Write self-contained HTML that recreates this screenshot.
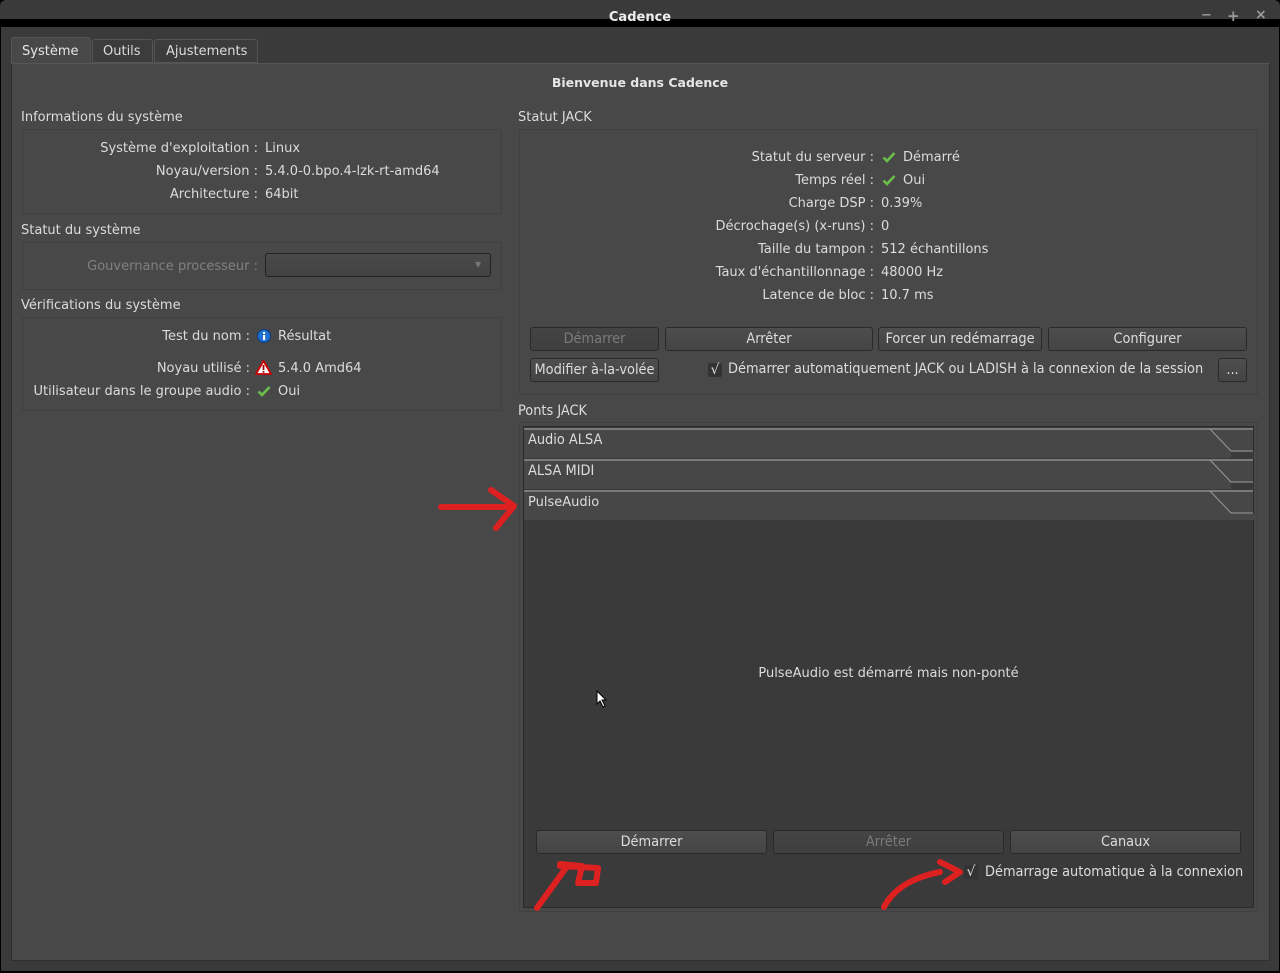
<!DOCTYPE html>
<html><head><meta charset="utf-8"><style>
*{box-sizing:border-box;margin:0;padding:0}
body{width:1280px;height:973px;background:#000;font-family:"DejaVu Sans","Liberation Sans",sans-serif;font-size:13px;color:#dcdcdc;position:relative;overflow:hidden}
.a{position:absolute;white-space:nowrap}
#w{position:absolute;left:0;top:3px;width:1280px;height:970px}
.box{position:absolute;border:1px solid #404040;border-radius:2px}
.btn{position:absolute;height:24px;border:1px solid #2a2a2a;border-radius:3px;background:linear-gradient(#4e4e4e,#444);font-family:"DejaVu Sans Condensed","DejaVu Sans",sans-serif;font-size:14.4px;text-align:center;line-height:22px;color:#dcdcdc}
.dis{color:#7a7a7a;background:linear-gradient(#444,#3f3f3f)}
.r{text-align:right}
.cond{font-family:"DejaVu Sans Condensed","DejaVu Sans",sans-serif;font-size:14.4px}
.hdr{position:absolute;left:524px;width:729px;height:30px;background:#474747;border-top:2px solid #7a7a7a}
.cb{position:absolute;width:14px;height:14px;background:#333;border-radius:2px;color:#ddd;font-size:14px;line-height:14px;text-align:center}
</style></head><body>
<div class="a" style="left:0;top:0;width:1280px;height:19px;background:#3a3a3a;border-radius:6px 6px 0 0"></div>
<div class="a" style="left:0;top:10px;width:1280px;text-align:center;font-weight:bold;color:#eee;font-size:13px;line-height:16px;z-index:2">Cadence</div>
<div class="a" style="left:1201px;top:8px;color:#999;font-weight:bold">−</div>
<div class="a" style="left:1227px;top:7px;color:#999;font-weight:bold;font-size:15px">+</div>
<div class="a" style="left:1255px;top:7px;color:#999;font-weight:bold;font-size:14px">×</div>
<div class="a" style="left:1px;top:27px;width:1278px;height:944px;background:#3a3a3a"></div>
<div id="w">
<div class="a" style="left:11px;top:34px;width:80px;height:28px;background:#484848;border:1px solid #555;border-bottom:none;border-radius:3px 3px 0 0;padding:6px 0 0 10px;color:#e6e6e6">Système</div>
<div class="a" style="left:92px;top:36px;width:61px;height:24px;background:#3c3c3c;border:1px solid #555;border-radius:3px 3px 0 0;padding:4px 0 0 10px">Outils</div>
<div class="a" style="left:154px;top:36px;width:104px;height:24px;background:#3c3c3c;border:1px solid #555;border-radius:3px 3px 0 0;padding:4px 0 0 11px">Ajustements</div>
<div class="a" style="left:11px;top:60px;width:1259px;height:898px;background:#484848;border:1px solid #2f2f2f;border-top:1px solid #555"></div>
<div class="a" style="left:0;top:72px;width:1280px;text-align:center;font-weight:bold;font-size:12.5px;color:#e6e6e6">Bienvenue dans Cadence</div>
<div class="a" style="left:21px;top:107px">Informations du système</div>
<div class="box" style="left:22px;top:126px;width:480px;height:85px"></div>
<div class="a r" style="left:30px;width:228px;top:138px">Système d'exploitation :</div><div class="a" style="left:265px;top:138px">Linux</div>
<div class="a r" style="left:30px;width:228px;top:161px">Noyau/version :</div><div class="a" style="left:265px;top:161px">5.4.0-0.bpo.4-lzk-rt-amd64</div>
<div class="a r" style="left:30px;width:228px;top:184px">Architecture :</div><div class="a" style="left:265px;top:184px">64bit</div>
<div class="a" style="left:21px;top:220px">Statut du système</div>
<div class="box" style="left:22px;top:239px;width:480px;height:48px"></div>
<div class="a r" style="left:30px;width:228px;top:256px;color:#808080">Gouvernance processeur :</div>
<div class="a" style="left:265px;top:250px;width:226px;height:24px;border:1px solid #222;border-radius:3px;background:linear-gradient(#4a4a4a,#424242)"></div>
<div class="a" style="left:475px;top:257px;color:#777;font-size:8px">▼</div>
<div class="a" style="left:21px;top:295px">Vérifications du système</div>
<div class="box" style="left:22px;top:314px;width:480px;height:94px"></div>
<div class="a r" style="left:30px;width:220px;top:326px">Test du nom :</div>
<svg class="a" style="left:257px;top:326px" width="14" height="14"><circle cx="7" cy="7" r="6.5" fill="#1e6fd0" stroke="#0c3d80"/><rect x="6" y="6" width="2.2" height="5" fill="#fff"/><circle cx="7.1" cy="4" r="1.2" fill="#fff"/></svg>
<div class="a" style="left:278px;top:326px">Résultat</div>
<div class="a r" style="left:30px;width:220px;top:358px">Noyau utilisé :</div>
<svg class="a" style="left:255px;top:357px" width="17" height="15"><path d="M8.5 1L16 14H1z" fill="#fff" stroke="#c00" stroke-width="1.8" stroke-linejoin="round"/><rect x="7.6" y="5" width="1.8" height="5" fill="#900"/><rect x="7.6" y="11" width="1.8" height="1.7" fill="#900"/></svg>
<div class="a" style="left:278px;top:358px">5.4.0 Amd64</div>
<div class="a r" style="left:30px;width:220px;top:381px">Utilisateur dans le groupe audio :</div>
<svg class="a" style="left:257px;top:382px" width="14" height="12"><path d="M1.5 6.5L5 10 12.5 2" fill="none" stroke="#6ac04a" stroke-width="2.6"/></svg>
<div class="a" style="left:278px;top:381px">Oui</div>
<div class="a" style="left:518px;top:107px">Statut JACK</div>
<div class="box" style="left:519px;top:126px;width:739px;height:266px"></div>
<div class="a r" style="left:560px;width:314px;top:147px">Statut du serveur :</div><svg class="a" style="left:882px;top:148px" width="14" height="12"><path d="M1.5 6.5L5 10 12.5 2" fill="none" stroke="#6ac04a" stroke-width="2.6"/></svg><div class="a" style="left:903px;top:147px">Démarré</div>
<div class="a r" style="left:560px;width:314px;top:170px">Temps réel :</div><svg class="a" style="left:882px;top:171px" width="14" height="12"><path d="M1.5 6.5L5 10 12.5 2" fill="none" stroke="#6ac04a" stroke-width="2.6"/></svg><div class="a" style="left:903px;top:170px">Oui</div>
<div class="a r" style="left:560px;width:314px;top:193px">Charge DSP :</div><div class="a" style="left:881px;top:193px">0.39%</div>
<div class="a r" style="left:560px;width:314px;top:216px">Décrochage(s) (x-runs) :</div><div class="a" style="left:881px;top:216px">0</div>
<div class="a r" style="left:560px;width:314px;top:239px">Taille du tampon :</div><div class="a" style="left:881px;top:239px">512 échantillons</div>
<div class="a r" style="left:560px;width:314px;top:262px">Taux d'échantillonnage :</div><div class="a" style="left:881px;top:262px">48000 Hz</div>
<div class="a r" style="left:560px;width:314px;top:285px">Latence de bloc :</div><div class="a" style="left:881px;top:285px">10.7 ms</div>
<div class="btn dis" style="left:530px;top:324px;width:129px">Démarrer</div>
<div class="btn" style="left:665px;top:324px;width:208px">Arrêter</div>
<div class="btn" style="left:878px;top:324px;width:164px">Forcer un redémarrage</div>
<div class="btn" style="left:1048px;top:324px;width:199px">Configurer</div>
<div class="btn" style="left:530px;top:355px;width:129px">Modifier à-la-volée</div>
<div class="cb" style="left:708px;top:360px">√</div>
<div class="a cond" style="left:728px;top:358px">Démarrer automatiquement JACK ou LADISH à la connexion de la session</div>
<div class="btn" style="left:1218px;top:355px;width:29px">...</div>
<div class="a cond" style="left:518px;top:400px">Ponts JACK</div>
<div class="box" style="left:519px;top:419px;width:739px;height:490px"></div>
<div class="a" style="left:523px;top:423px;width:731px;height:482px;background:#3a3a3a;border:1px solid #2a2a2a"></div>
<div class="hdr" style="top:425px"></div>
<div class="hdr" style="top:456px"></div>
<div class="hdr" style="top:487px"></div>
<div class="a" style="left:1231px;top:449px;width:23px;height:7px;background:#3a3a3a"></div>
<div class="a" style="left:1231px;top:480px;width:23px;height:7px;background:#3a3a3a"></div>
<div class="a" style="left:1231px;top:511px;width:23px;height:6px;background:#474747"></div>
<svg class="a" style="left:1205px;top:425px" width="50" height="95"><g fill="none" stroke="#999" stroke-width="1"><path d="M5 1L26 23H48"/><path d="M5 32L26 54H48"/><path d="M5 63L26 85H48"/></g></svg>
<div class="a cond" style="left:528px;top:429px">Audio ALSA</div>
<div class="a cond" style="left:528px;top:460px">ALSA MIDI</div>
<div class="a" style="left:528px;top:492px">PulseAudio</div>
<div class="a" style="left:524px;top:663px;width:729px;text-align:center">PulseAudio est démarré mais non-ponté</div>
<svg class="a" style="left:596px;top:687px" width="12" height="18"><path d="M1 1V14L4 11 7 17 9 16 6 10H10z" fill="#fff" stroke="#000" stroke-width="1"/></svg>
<div class="btn" style="left:536px;top:827px;width:231px">Démarrer</div>
<div class="btn dis" style="left:773px;top:827px;width:231px">Arrêter</div>
<div class="btn" style="left:1010px;top:827px;width:231px">Canaux</div>
<div class="cb" style="left:964px;top:862px">√</div>
<div class="a cond" style="left:985px;top:861px">Démarrage automatique à la connexion</div>
</div>
<svg class="a" style="left:0;top:0" width="1280" height="973"><g fill="none" stroke="#dd2020" stroke-width="6" stroke-linecap="round" stroke-linejoin="round"><path d="M441 507H513M491 490L514 506 496 528"/><path d="M537 908L568 865M560 866L598 868 596 883 578 883 582 866 560 864"/><path d="M884 907C893 890 910 878 940 872M940 862L960 872 945 882"/></g></svg>
</body></html>
